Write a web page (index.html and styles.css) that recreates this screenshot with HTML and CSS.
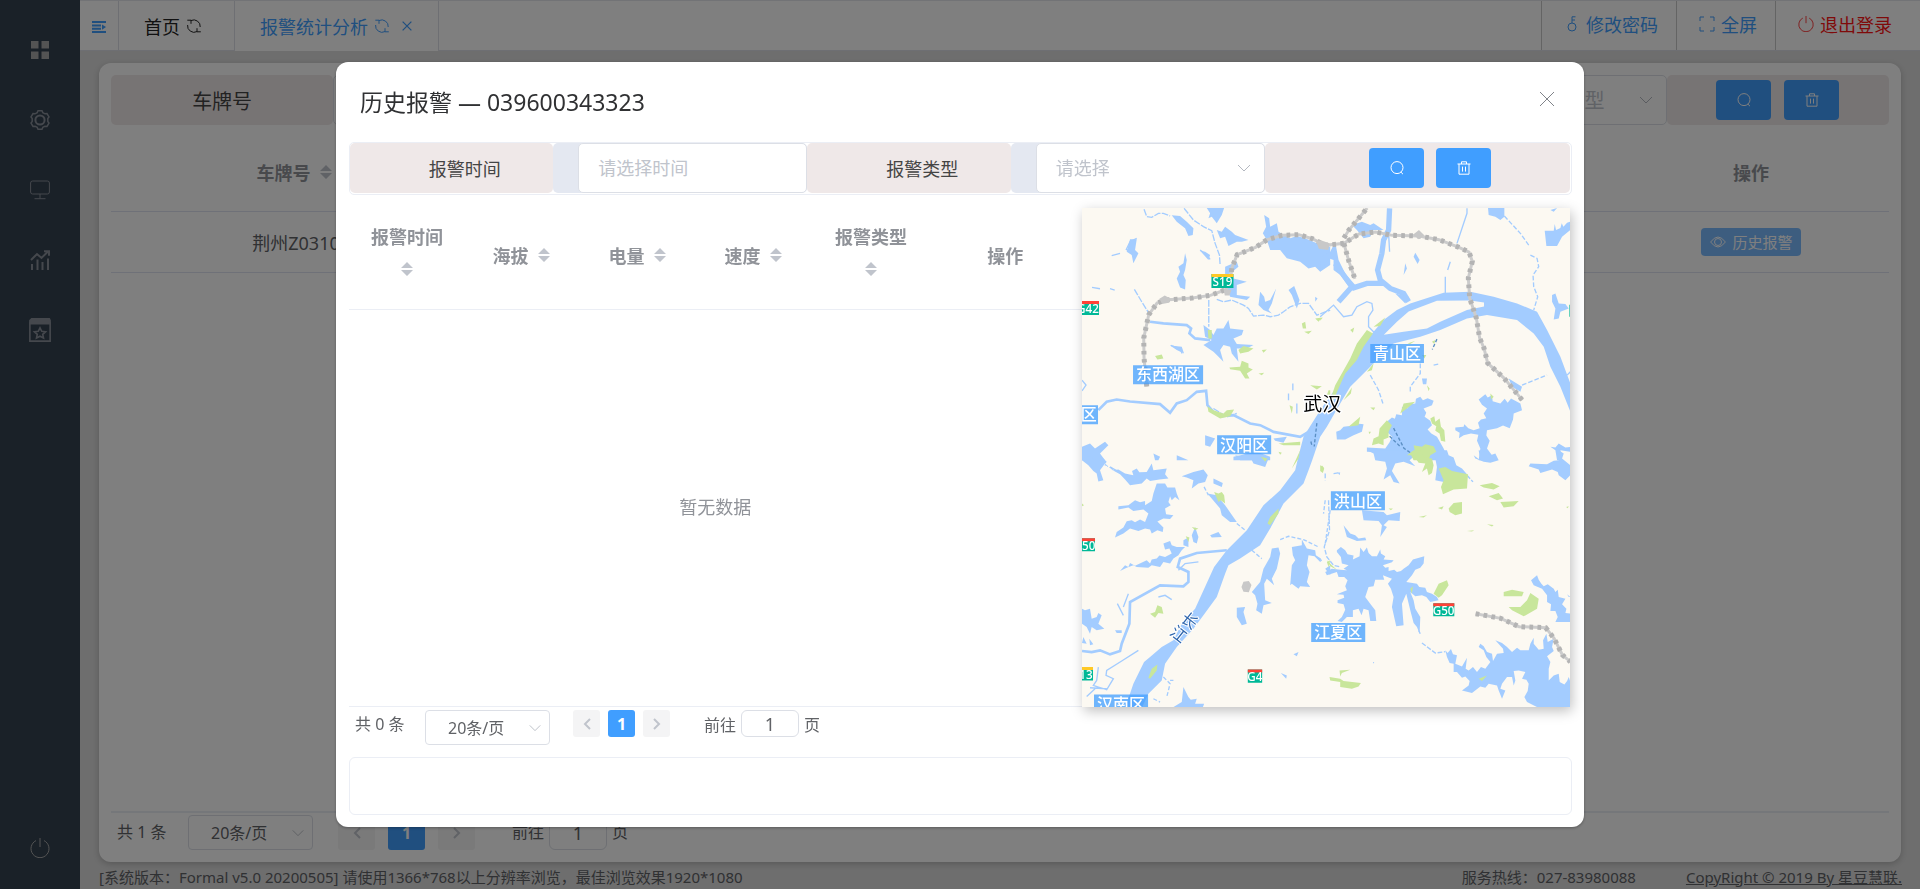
FILE: index.html
```html
<!DOCTYPE html>
<html lang="zh-CN">
<head>
<meta charset="utf-8">
<title>报警统计分析</title>
<link rel="stylesheet" href="styles.css">
</head>
<body>
<svg class="sprite" aria-hidden="true">
  <symbol id="i-refresh" viewBox="0 0 16 16"><path d="M5 2.5A6.5 6.5 0 0 1 14.2 9M11 13.6A6.5 6.5 0 0 1 1.6 7M1.3 2.2H5v3.6M14.8 13.8H11v-3.6" /></symbol>
  <symbol id="i-search" viewBox="0 0 16 16"><circle cx="8" cy="7.6" r="6" /><path d="M11.8 12 14 14.2" /></symbol>
  <symbol id="i-trash" viewBox="0 0 16 16"><path d="M1.5 4h13M5.5 4V1.8h5V4M3 4v10.2h10V4M6.5 6.6v5M9.5 6.6v5" /></symbol>
  <symbol id="i-down" viewBox="0 0 16 16"><path d="m2 5 6 6 6-6" /></symbol>
  <symbol id="i-close" viewBox="0 0 16 16"><path d="m1 1 14 14M15 1 1 15" /></symbol>
  <symbol id="i-power" viewBox="0 0 20 20"><path d="M6 2.6a9 9 0 1 0 8 0M10 0v9" /></symbol>
  <symbol id="i-prev" viewBox="0 0 16 16"><path d="m11 3-5 5 5 5" /></symbol>
  <symbol id="i-next" viewBox="0 0 16 16"><path d="m5 3 5 5-5 5" /></symbol>
  <symbol id="i-sort" viewBox="0 0 12 14"><path d="M6 0 12 6H0zM0 8h12l-6 6z" /></symbol>
</svg>

<div class="app">
  <nav class="sidebar" aria-label="主菜单">
    <a href="#grid" class="side-link bright" aria-label="首页"><svg class="icon-l solid" viewBox="0 0 20 20"><path d="M1 1h7.500v7.500H1zM11.500 1H19v7.500h-7.500zM1 11.500h7.500V19H1zM11.500 11.500H19V19h-7.500z" /></svg></a>
    <a href="#setting" class="side-link" aria-label="设置"><svg class="icon-l" viewBox="0 0 20 20"><path d="M7.200 2.600 8 .8h4l.8 1.800 2.200 1.200 2-.3 2 3.400-1.200 1.700v2.800l1.200 1.700-2 3.400-2-.3-2.200 1.200-.8 1.800H8l-.8-1.800L5 16.200l-2 .3-2-3.400 1.200-1.700V8.600L1 6.900l2-3.400 2 .3z" stroke-width="1.500" /><circle cx="10" cy="10" r="4.600" stroke-width="2" /></svg></a>
    <a href="#monitor" class="side-link" aria-label="监控"><svg class="icon-l" viewBox="0 0 20 20"><rect x=".6" y="1" width="18.800" height="13" rx="2" /><path d="M10 14v4.500M4.500 18.700h11" /></svg></a>
    <a href="#stats" class="side-link" aria-label="统计"><svg class="icon-l thick" viewBox="0 0 20 20"><path d="M1 10 7 4l4.500 4L18 1.500M14 1.200h5v4.500M2 14v6M7.500 9.500V20M12.500 12v8M18 8.500V20" /></svg></a>
    <a href="#report" class="side-link" aria-label="报表"><svg class="icon-xl" viewBox="0 0 20 22"><path class="fill" d="M0 2 2 0h17l1 2v4H0z" /><path d="M.7 4v17.200h18.600V4M10 9l1.600 3.200 3.500.4-2.600 2.400.7 3.400-3.200-1.700-3.200 1.700.7-3.400-2.600-2.400 3.500-.4z" stroke-width="1.500" /></svg></a>
    <button class="side-link side-exit bright" aria-label="退出"><svg class="icon-l"><use href="#i-power" /></svg></button>
  </nav>

  <div class="main">
    <header class="topbar">
      <button class="fold" aria-label="折叠菜单"><svg viewBox="0 0 14 12"><path d="M0 1h14M0 4.500h9M0 7.700h9M0 11h14" /><path class="fill" d="m10 3.500 4 2.600-4 2.600z" /></svg></button>
      <a href="#home" class="tab">首页<svg class="icon"><use href="#i-refresh" /></svg></a>
      <a href="#alarm" class="tab active">报警统计分析<svg class="icon"><use href="#i-refresh" /></svg><svg class="icon-xs" viewBox="0 0 16 16"><use href="#i-close" /></svg></a>
      <div class="actions">
        <a href="#password" class="action password"><svg class="icon" viewBox="0 0 16 16"><circle cx="8" cy="11" r="4" /><path d="M8 7V.8h3.500M8 4h3" /></svg>修改密码</a>
        <a href="#full" class="action full"><svg class="icon" viewBox="0 0 16 16"><path d="M1 5V1h4M11 1h4v4M15 11v4h-4M5 15H1v-4" /></svg>全屏</a>
        <a href="#logout" class="action logout"><svg class="icon" viewBox="0 0 20 20"><use href="#i-power" /></svg>退出登录</a>
      </div>
    </header>

    <main class="content">
      <section class="card">
        <div class="search-row">
          <label class="cell-label" for="plate">车牌号</label>
          <input id="plate" class="field" type="text">
          <span class="cell-label"></span>
          <input class="field" type="text" aria-label="设备号">
          <span class="cell-label"></span>
          <input class="field" type="text" aria-label="时间">
          <span class="select-box"><select class="field placeholder" aria-label="报警类型"><option>请选择报警类型</option></select><svg class="icon chevron"><use href="#i-down" /></svg></span>
          <div class="cell-buttons">
            <button class="btn" aria-label="搜索"><svg class="icon"><use href="#i-search" /></svg></button>
            <button class="btn" aria-label="清空"><svg class="icon"><use href="#i-trash" /></svg></button>
          </div>
        </div>
        <div class="page-table">
          <table class="grid-table">
            <colgroup><col class="col-plate"><col><col class="col-op"></colgroup>
            <thead><tr><th><span class="head">车牌号<svg class="sort"><use href="#i-sort" /></svg></span></th><th></th><th>操作</th></tr></thead>
            <tbody><tr><td>荆州Z0310</td><td></td><td><button class="btn-history"><svg class="icon" viewBox="0 0 16 16"><path d="M.6 8Q8-2 15.400 8 8 18 .6 8z" /><circle cx="8" cy="8" r="3.500" /></svg>历史报警</button></td></tr></tbody>
          </table>
        </div>
        <div class="pager pager-page">
          <span class="total">共 1 条</span>
          <span class="select-box"><select class="page-size" aria-label="每页条数"><option>20条/页</option></select><svg class="icon-s chevron" viewBox="0 0 16 16"><use href="#i-down" /></svg></span>
          <div class="pages">
            <button class="page" aria-label="上一页"><svg class="icon"><use href="#i-prev" /></svg></button>
            <button class="page current">1</button>
            <button class="page" aria-label="下一页"><svg class="icon"><use href="#i-next" /></svg></button>
          </div>
          <label class="jump">前往<input type="text" value="1">页</label>
        </div>
      </section>
    </main>

    <footer class="footer">
      <span>[系统版本：Formal v5.0 20200505] 请使用1366*768以上分辨率浏览，最佳浏览效果1920*1080</span>
      <span class="hotline">服务热线：027-83980088</span>
      <a href="#copyright">CopyRight © 2019 By 星豆慧联.</a>
    </footer>
  </div>
</div>

<div class="overlay">
  <div class="dialog" role="dialog" aria-labelledby="dialog-title">
    <div class="dialog-head">
      <h2 id="dialog-title">历史报警 — 039600343323</h2>
      <button class="dialog-close" aria-label="关闭"><svg class="icon"><use href="#i-close" /></svg></button>
    </div>
    <div class="filter">
      <label class="filter-label" for="time">报警时间</label>
      <span class="filter-input"><input id="time" class="field" type="text" placeholder="请选择时间"></span>
      <label class="filter-label" for="type">报警类型</label>
      <span class="filter-input"><span class="select-box"><select id="type" class="field placeholder"><option>请选择</option></select><svg class="icon chevron"><use href="#i-down" /></svg></span></span>
      <div class="filter-buttons">
        <button class="btn" aria-label="搜索"><svg class="icon"><use href="#i-search" /></svg></button>
        <button class="btn" aria-label="清空"><svg class="icon"><use href="#i-trash" /></svg></button>
      </div>
    </div>
    <div class="dialog-body">
      <div class="history">
        <table class="history-table">
          <colgroup><col span="5" class="col-data"><col></colgroup>
          <thead><tr>
            <th><span class="head stacked">报警时间<svg class="sort"><use href="#i-sort" /></svg></span></th>
            <th><span class="head">海拔<svg class="sort"><use href="#i-sort" /></svg></span></th>
            <th><span class="head">电量<svg class="sort"><use href="#i-sort" /></svg></span></th>
            <th><span class="head">速度<svg class="sort"><use href="#i-sort" /></svg></span></th>
            <th><span class="head stacked">报警类型<svg class="sort"><use href="#i-sort" /></svg></span></th>
            <th>操作</th>
          </tr></thead>
        </table>
        <div class="empty">暂无数据</div>
      </div>
      <div class="map">
        <svg viewBox="0 0 1464 1497" preserveAspectRatio="xMidYMid slice" role="img" aria-label="武汉地图">
          <g class="stream">
            <!-- north-west -->
            <g transform="translate(-36 -24)">
              <path d="M222 28 230 50 245 52 265 40 280 40 300 48M342 25 370 60 400 80 425 92 435 130 448 165 450 195M193 268 215 305 240 345M416 300 416 380M440 298 460 305 485 300 520 315 535 325 550 348 580 345 600 350 625 345 640 335 660 320 690 310 715 310 740 345 780 330M430 625 470 650 500 640" stroke-dasharray="20 4" />
              <path d="M66 262 90 266M120 266 134 270" />
              <path class="w2" d="M240 365 280 370 350 375 363 385 358 400 375 415 420 420M85 630 110 605 140 598 180 604 270 612 300 638 320 610 350 600 380 575 408 572 412 615 430 635 450 648 490 645 540 670 570 675 610 695 690 710 715 695" />
              <path d="M36 540 48 555 36 572M168 150 180 125 200 115M125 167 150 160M170 150 195 150M390 150 410 165 420 178M302 436 330 445 336 460M668 550 668 570M655 580 655 600M680 610 680 640" />
            </g>
            <!-- north-east -->
            <g transform="translate(714 -24)">
              <path d="M0 350 40 315 70 350 95 345 110 320 140 305 155 310 158 330 145 350 145 380 165 400M440 25 440 40 410 130M375 230 375 280M390 185 382 210M205 100 208 155M740 525 750 515" />
              <path d="M552 48 600 100 625 135M630 165 650 175 655 200 638 225 640 260 652 290 640 330M150 525 175 570 188 610M300 490 300 520 270 560 270 580M605 555 680 525M340 495 355 492" stroke-dasharray="14 6" />
              <path class="w4" d="M208 25 205 90 190 120 185 160 172 210 180 240 210 265 250 280 265 305M45 190 95 260 55 305M95 265 140 250 190 250" />
            </g>
            <!-- south-west -->
            <g transform="translate(-36 726)">
              <path class="w2" d="M470 300 380 308 330 325 323 350 355 365 355 395 340 408 270 405 180 455 178 520 155 580 150 602 120 612 90 600 65 605 36 602" />
              <path d="M205 600 155 632 110 660 108 675 130 685 110 718 85 710 70 705 80 690 85 650M110 715 60 712M50 738 75 715M265 440 285 435 305 448M142 460 160 495M175 430 160 470M325 360 345 340 385 335M120 50 180 85" />
              <path d="M402 110 415 135M500 220 525 240M545 300 575 325M630 268 655 258 700 268 745 290M765 150 760 190M780 180 765 280M280 680 300 700 290 740M250 745 270 755M300 690 310 690" stroke-dasharray="12 6" />
            </g>
            <!-- south-east -->
            <g transform="translate(714 726)">
              <path d="M15 70 15 90M25 150 28 240 12 290 20 320 40 345 60 350M305 578 345 608 375 604M440 75 458 95M295 540 300 550M40 70 55 68" stroke-dasharray="14 5" />
            </g>
          </g>

          <g class="water">
            <path d="M130 1497 154 1426 186 1361 204 1346 239 1316 274 1296 299 1246 339 1201 396 1076 434 1026 494 966 544 891 594 846 639 786 650 740 664 686 714 606 764 536 794 476 844 406 874 371 904 336 944 306 984 286 1084 254 1164 251 1234 266 1304 286 1364 311 1394 366 1434 446 1464 526V611L1434 536 1404 476 1384 416 1354 376 1304 336 1214 321 1154 331 1074 366 1014 386 934 406 884 456 844 496 804 536 774 586 734 656 714 686 690 756 679 786 664 826 604 886 564 961 534 1011 474 1051 439 1071 429 1096 404 1166 364 1221 334 1261 284 1316 249 1366 239 1416 199 1456 180 1497z" />
            <g transform="translate(-36 -24)">
              <path d="M305 46 330 48 350 65 370 85 368 105 355 108 345 85 320 65zM410 24 462 24 455 45 440 70 425 50 415 55 420 40zM440 90 455 95 465 80 485 95 495 105 535 120 515 125 500 125 475 138 465 110 450 115zM582 45 597 55 600 80 620 70 625 95 660 115 680 108 705 115 740 130 780 140 780 195 750 215 735 200 715 205 690 185 650 175 630 150 600 150 590 120 578 100 588 80zM345 160 350 180 345 210 340 225 347 240 345 268 330 262 320 235 330 215 325 200 340 190zM180 118 200 118 195 150 205 160 190 190 185 165 170 155zM570 275 582 290 585 305 600 300 618 265 605 310 595 330 605 340 580 330 565 315zM655 270 672 258 688 300 680 325 665 285zM735 290 742 295 735 305zM490 235 530 245 500 255 500 285 540 290 530 300 480 290 470 265zM465 200 500 185 505 200 480 220 465 225zM390 152 405 155 420 165 415 180zM400 375 420 390 430 405 440 385 460 385 475 360 480 385 520 390 515 405 490 415 500 432 550 435 530 445 500 445 505 485 485 460 480 440 460 435 450 450 460 485 440 465 430 455 400 435 425 420 405 410zM300 436 335 440 342 460 320 450zM36 740 60 730 75 745 105 725 115 735 90 760 105 780 36 780zM405 705 435 715 420 740 405 735zM250 760 270 770 265 780 255 780zM320 765 355 780 320 780zM490 770 560 755 600 770 600 780 490 780zM610 715 650 710 640 728 615 722z" />
            </g>
            <g transform="translate(714 -24)">
              <path d="M95 75 125 65 150 75 160 70 190 90 160 90 150 110 130 115 110 90zM30 155 45 125 55 180 75 220 105 255 90 265 60 225 40 210 40 180 25 175 0 215 0 172zM255 190 260 205 250 225zM285 158 298 180 292 192 280 170zM503 24 552 24 552 50 540 60 525 50 505 45zM673 92 700 92 703 72 707 90 720 84 724 70 729 80 740 68 750 65V90L725 110 710 138 678 138zM690 30 710 24 700 35zM695 285 705 280 715 310 735 312 745 325 720 335 715 355 700 358 705 325 695 305zM565 535 605 560 600 575 575 560zM305 535 320 535 318 552 308 552zM475 598 495 582 502 592 515 585 517 603 540 610 553 596 562 608 572 595 600 610 605 630 580 640 578 658 568 684 548 676 530 684 500 690 498 706 508 722 500 745 515 765 513 780 475 780 480 745 470 722 474 704 452 700 430 705 416 714 418 698 405 690 405 682 430 680 432 672 444 684 460 690 478 684 473 668 482 658 498 654 490 640 500 625 485 614zM245 620 262 624 268 612 285 610 287 596 300 590 308 600 322 594 340 602 335 615 310 625 318 638 313 650 330 662 335 675 322 688 333 700 350 710 370 745 385 780 290 780 270 760 255 780 222 770 200 757 140 755 140 742 195 745 208 726 215 710 200 695 205 680 200 665 215 652 224 656 228 642 245 645zM48 695 60 690 70 680 100 676 110 670 130 672 125 695 100 705 75 718 50 718zM690 740 705 742 715 730 735 742 750 740V755L720 750 725 780 710 780 705 750zM225 280 265 290 255 310z" />
            </g>
            <g transform="translate(-36 726)">
              <path d="M36 24 60 18 72 28 100 25 110 35 103 45 125 52 130 60 145 58 165 70 190 75 186 62 200 55 208 66 230 65 245 40 250 60 290 55 285 72 295 85 268 88 240 92 230 85 215 100 180 105 165 88 150 72 128 60 105 40 90 60 100 90 85 94 80 70 70 62 55 45 36 30zM260 100 285 100 292 112 315 112 320 130 328 150 315 140 305 150 300 138 295 155 302 165 285 175 288 192 310 195 300 206 280 205 262 214 280 232 278 245 262 240 245 250 240 238 225 235 205 242 180 235 160 250 135 262 140 245 160 232 170 213 185 210 195 216 210 208 225 215 235 190 220 178 190 182 175 172 145 178 145 168 175 165 195 150 210 156 225 152 225 165 245 152 250 130zM335 78 370 65 400 58 413 75 405 95 385 100 365 115 370 90 350 82zM430 85 458 98 455 110 430 100zM412 130 440 135 465 165 500 215 480 215 455 195 450 175zM365 255 375 230 385 260 380 280 370 275zM340 270 355 262 355 290 340 285zM420 255 445 245 455 260 425 262zM280 280 300 272 305 285 320 290 345 290 335 300 325 315 310 325 300 340 280 335 270 350 245 345 235 352 200 350 190 345 170 352 150 362 165 345 175 350 180 338 195 346 230 330 240 340 245 328 260 325 268 316 285 320 305 310 298 295 285 298zM36 475 45 480 60 475 65 505 80 500 85 488 95 495 85 520 103 535 80 540 65 530 60 550 50 530 36 520zM605 295 625 292 630 310 620 355 605 385 612 405 590 385 582 400 585 450 605 458 580 465 575 490 558 480 562 460 555 435 545 425 570 395 580 355 600 320zM665 290 695 285 695 268 710 295 735 300 737 315 752 325 750 335 733 318 715 315 710 345 718 365 710 395 720 410 690 408 685 415 665 400 660 405 665 345 675 330 668 315zM500 472 525 470 520 485 530 520 515 525 500 500zM495 15 510 18 530 10 560 10 595 25 585 50 550 40 545 30 510 30zM310 770 335 755 340 710 355 740 362 748 380 745 375 760 402 760 395 780 310 780zM135 540 155 540 155 548 140 548zM670 612 685 605 680 618zM632 668 650 675 648 685zM40 560 50 580 36 578zM58 565 70 582 60 585zM765 355 780 345 780 375z" />
            </g>
            <g transform="translate(714 726)">
              <path d="M140 0 260 0 280 20 268 30 285 48 270 42 250 35 225 40 215 62 238 100 220 95 210 75 190 88 200 55 195 35 165 30 160 10zM340 0 380 0 385 15 400 22 408 45 425 55 440 72 370 95 345 90 350 50zM460 15 480 30 475 0 500 5 510 15 525 10 535 30 510 38 490 35 465 25zM715 0 730 10 725 25 750 45V75L735 90 715 75 712 65 695 58 660 68 655 58 625 48 630 40 680 42 700 32 715 30zM125 180 190 185 200 195 240 185 238 212 205 210 190 225 200 230 180 260 185 225 175 212 130 210zM70 225 90 250 105 255 115 265 135 262 138 270 110 272 80 260zM50 300 62 290 75 300 82 312 100 316 98 328 118 318 120 292 130 305 140 292 145 308 155 318 170 318 180 298 182 310 195 318 190 328 220 330 215 336 188 345 195 352 205 350 205 362 222 358 230 365 242 362 250 355 265 345 278 328 312 318 310 340 300 352 285 358 275 375 258 395 290 400 297 410 315 412 320 425 335 430 350 440 355 450 330 455 318 440 305 435 285 438 270 425 280 450 285 475 300 500 298 550 290 530 280 518 270 480 258 430 245 460 250 525 228 528 215 470 220 440 212 415 203 400 215 385 188 375 192 388 165 388 160 408 145 410 135 440 150 460 165 480 168 512 150 512 145 480 130 475 124 495 115 475 98 480 98 500 80 500 65 515 52 512 65 500 75 478 70 462 52 458 52 450 72 442 70 433 50 432 80 420 75 408 82 390 72 380 55 380 50 365 20 375 15 365 35 355 60 358 80 360 70 355 85 345 65 340 62 320 50 305zM52 67 60 67 58 75zM632 390 650 375 655 388 663 400 670 408 682 402 700 415 705 425 712 418 715 440 735 445 725 462 738 475 735 488 750 490V515L705 515 712 500 705 482 690 482 692 462 680 455 680 435 665 415 640 405zM375 600 382 608 392 596 398 612 410 615 405 640 425 648 440 622 436 655 445 660 458 650 470 665 482 650 495 655 510 635 498 620 490 600 475 590 480 580 490 588 500 605 515 610 518 632 530 610 550 608 548 595 525 570 545 578 560 590 575 605 590 592 600 600 625 600 630 580 640 562 640 580 655 598 670 595 668 570 678 550 682 575 700 565 695 590 700 602 680 618 690 635 685 655 685 690 700 675 715 670 718 695 732 702 740 692 745 680 750 695V770H650L620 755 612 740 622 722 625 700 618 688 605 685 615 665 595 660 580 662 585 690 580 705 575 680 560 680 545 700 540 715 555 720 545 745 535 720 530 705 505 700 495 712 480 708 455 728 425 720 445 705 448 692 435 678 425 682 410 665 400 665 400 640 388 638 380 620zM740 432 750 440 745 440zM158 635 162 635 160 640zM0 325 6 330 0 335z" />
            </g>
          </g>
          <path class="land" d="M904 381 944 341 979 310 1064 278 1164 277 1205 283 1205 295 1154 306 1074 341 1034 361 964 371 900 381z" />

          <g class="green">
            <g transform="translate(-36 -24)"><path d="M413 390 425 390 425 415 415 415zM505 450 520 438 550 445 535 455 510 460zM478 502 510 500 515 482 535 490 535 502 548 508 530 520 538 535 525 535 510 512 480 507zM565 520 582 518 575 525zM255 468 275 463 280 475 262 478zM575 450 590 448 580 458zM695 370 705 365 708 385 698 385zM702 395 725 392 715 402zM735 355 755 352 745 365zM720 555 755 558 740 568zM658 615 668 620 665 640zM412 618 430 630 460 640 470 630 492 628 480 648 450 655 415 635zM625 730 690 725 690 735 640 735zM775 570 780 570 780 585 765 600z" /></g>
            <g transform="translate(714 -24)"><path d="M30 600 45 555 90 475 110 430 140 390 158 400 130 440 110 480 75 520 55 565 35 610zM160 380 195 352 180 378zM90 390 102 382 98 398zM70 600 95 562 92 580zM140 515 160 490 155 510zM335 425 345 420 342 432zM262 430 285 422 270 432zM0 355 8 352 0 362zM155 735 160 715 175 708 178 685 200 660 215 675 205 695 205 712 190 718 190 735 175 730zM330 655 342 648 345 665 358 655 362 680 372 690 375 725 362 722 358 700 345 692 348 678 335 670zM270 760 285 758 280 735 305 740 315 732 340 738 348 755 330 765 325 780 280 780zM320 555 328 565 325 573zM510 580 520 590 512 598zM145 695 152 695 148 702zM240 640 250 610 285 605 260 625zM85 680 120 650 115 675zM150 622 165 622 160 630zM305 465 318 465 312 475z" /></g>
            <g transform="translate(-36 726)"><path d="M592 220 600 200 625 175 625 190 600 225zM235 682 245 655 262 642 260 660 240 685zM432 125 445 130 455 125 462 135 465 160 452 150 445 155zM240 490 255 485 262 465 275 470 280 490 265 488 255 502zM347 258 358 262 355 275zM365 230 385 235 375 240zM572 20 592 25 585 35zM755 45 762 55 758 68zM665 55 690 0 685 25zM625 5 635 8 630 14zM36 160 42 165 36 168zM770 335 780 330 775 350z" /></g>
            <g transform="translate(714 726)"><path d="M355 55 375 50 395 62 443 72 440 115 400 118 368 132 362 110 370 90zM385 175 400 158 425 155 425 190 405 195 388 185zM353 173 370 168 365 178zM478 105 515 98 538 108 520 118 490 112zM505 138 535 128 548 145 530 150zM540 155 595 152 580 168 550 172zM295 200 320 195 310 202zM500 222 520 224 515 229zM440 242 462 240 455 244zM205 175 218 175 212 180zM340 430 355 400 380 390 385 405 365 435 355 442zM270 415 278 408 275 430zM550 425 575 418 610 425 605 438 550 438zM565 470 600 470 620 450 630 428 655 445 650 475 610 498 575 480zM475 685 500 675 485 692zM28 680 60 685 70 692 122 698 115 708 95 715 60 710 60 695 30 690zM58 660 90 658 65 668 60 678zM0 45 10 50 8 68 0 62zM20 330 35 345 50 358 30 348zM260 15 280 0 300 0 310 22 335 25 340 45 335 68 325 75 320 55 305 65 315 40 295 38 280 15zM737 170 745 168 742 174z" /></g>
          </g>

          <g>
            <path class="rail" d="M194 535 186 450 185 390 200 320 225 285 250 276 330 270 385 262 430 245 445 220 449 180 465 140 520 118 555 95 600 82 650 80 690 92 730 112 785 106 830 78 880 72 930 82 1010 84 1070 95 1130 118 1160 132 1170 160 1158 210 1162 270 1182 330 1192 390 1205 420 1216 465 1265 510 1290 540 1320 576M785 106 800 160 818 212M785 90 800 66 855 0M1180 1216 1255 1230 1310 1255 1390 1258 1415 1290 1440 1340 1464 1360" />
            <path class="ties" d="M194 535 186 450 185 390 200 320 225 285 250 276 330 270 385 262 430 245 445 220 449 180 465 140 520 118 555 95 600 82 650 80 690 92 730 112 785 106 830 78 880 72 930 82 1010 84 1070 95 1130 118 1160 132 1170 160 1158 210 1162 270 1182 330 1192 390 1205 420 1216 465 1265 510 1290 540 1320 576M785 106 800 160 818 212M785 90 800 66 855 0M1180 1216 1255 1230 1310 1255 1390 1258 1415 1290 1440 1340 1464 1360" />
            <path class="station" d="M232 272 248 262 266 272 260 284 240 288zM424 242 448 246 442 262 428 262zM700 96 720 98 742 106 738 126 710 122zM992 80 1010 66 1026 82 1010 94zM484 1120 500 1118 508 1130 500 1152 484 1150 478 1136z" />
            <path class="bridge" d="M1064 393 1050 424M934 660 965 720 985 734M922 684 955 716M704 645 696 715M686 700 690 715" />
          </g>

          <g class="shield">
            <path class="body" d="M388 198h66v42h-66zM-12 279h63v42h-63zM0 990h39v39H0zM-12 1376h45v40h-45zM497 1383h43v40h-43zM1053 1185h63v39h-63zM1461 290h3v36h-3z" />
            <path class="red" d="M-12 279h63v9h-63zM0 990h39v9H0zM497 1383h43v9h-43zM1053 1185h63v9h-63z" />
            <path class="yellow" d="M388 198h66v9h-66zM-12 1376h45v9h-45z" />
            <text x="421" y="234">S19</text><text x="18" y="314">G42</text><text x="20" y="1024">50</text><text x="12" y="1412">13</text><text x="518" y="1418">G4</text><text x="1084" y="1220">G50</text>
          </g>
          <g class="district">
            <path d="M153 471h210v57H153zM0 591h48v57H0zM405 681h162v57H405zM864 408h161v57H864zM746 849h162v57H746zM687 1244h162v57H687zM36 1458h162v57H36z" />
            <text x="258" y="517">东西湖区</text><text x="20" y="637">区</text><text x="486" y="727">汉阳区</text><text x="944" y="454">青山区</text><text x="827" y="895">洪山区</text><text x="768" y="1290">江夏区</text><text x="117" y="1504">汉南区</text>
          </g>
          <text class="city" x="720" y="608">武汉</text>
          <text class="river" transform="translate(322 1238) rotate(38)" y="16">长</text>
          <text class="river" transform="translate(289 1278) rotate(38)" y="16">江</text>
        </svg>
      </div>
    </div>
    <div class="pager">
      <span class="total">共 0 条</span>
      <span class="select-box"><select class="page-size" aria-label="每页条数"><option>20条/页</option></select><svg class="icon-s chevron" viewBox="0 0 16 16"><use href="#i-down" /></svg></span>
      <div class="pages">
        <button class="page" aria-label="上一页"><svg class="icon"><use href="#i-prev" /></svg></button>
        <button class="page current">1</button>
        <button class="page" aria-label="下一页"><svg class="icon"><use href="#i-next" /></svg></button>
      </div>
      <label class="jump">前往<input type="text" value="1">页</label>
    </div>
    <div class="address"></div>
  </div>
</div>
</body>
</html>
```

FILE: styles.css
```css
* { box-sizing: border-box; }

body {
  margin: 0;
  font-family: "Noto Sans", "Noto Sans CJK SC", sans-serif;
  font-size: 18px;
  font-weight: 400;
  color: #606266;
}

button, input, select { font: inherit; color: inherit; margin: 0; }
button { border: 0; background: none; padding: 0; }
a { color: inherit; text-decoration: none; }

svg { fill: none; stroke: currentColor; flex: none; }
.sprite { position: absolute; width: 0; height: 0; }
.fill, .solid { fill: currentColor; stroke: none; }
.thick { stroke-width: 2; }
.icon { width: 16px; height: 16px; }
.icon-s { width: 14px; height: 14px; }
.icon-xs { width: 10px; height: 10px; stroke-width: 2; }
.icon-l { width: 20px; height: 20px; }
.icon-xl { width: 22px; height: 24px; }

/* Application frame */
.app { display: flex; height: 100vh; background: #dcdcdc; }

.sidebar {
  width: 80px;
  padding-top: 15px;
  display: flex;
  flex-direction: column;
  background: #344250;
  color: #8a909a;
}
.side-link { height: 70px; display: flex; align-items: center; justify-content: center; }
.side-link.bright { color: #a8a8a8; }
.side-exit { margin-top: auto; height: 82px; }

.main { flex: 1; min-width: 0; display: flex; flex-direction: column; }

.topbar {
  height: 51px;
  display: flex;
  flex: none;
  background: #fff;
  border-top: 1px solid #e4e7ed;
  border-bottom: 1px solid #dcdfe6;
}
.fold { width: 38px; color: #409eff; }
.fold svg { width: 14px; height: 12px; stroke-width: 2; }
.tab {
  display: flex;
  align-items: center;
  gap: 6px;
  padding: 0 32px 0 25px;
  border-left: 1px solid #dcdfe6;
  color: #222;
}
.tab.active {
  margin-bottom: -1px;
  padding-right: 26px;
  background: #fff;
  border-right: 1px solid #dcdfe6;
  color: #409eff;
}
.tab .icon-xs { margin-left: 6px; }
.actions { margin-left: auto; display: flex; color: #409eff; }
.action {
  display: flex;
  align-items: center;
  gap: 6px;
  padding: 0 18px 3px 22px;
  border-left: 1px solid #c8c8c8;
}
.logout { padding-right: 28px; color: #ff1414; }

.content { flex: 1; min-height: 0; padding: 12px 19px 0; display: flex; }
.card {
  flex: 1;
  padding: 12px;
  display: flex;
  flex-direction: column;
  background: #fff;
  border-radius: 12px;
  box-shadow: 0 2px 6px rgba(0, 0, 0, .2);
}

.search-row { display: grid; grid-template-columns: repeat(8, 1fr); height: 50px; font-size: 20px; }
.cell-label, .cell-buttons, .filter-label, .filter-buttons {
  display: flex;
  align-items: center;
  justify-content: center;
  background: #efe8e8;
  border-radius: 5px;
  color: #444;
}
.cell-buttons { gap: 13px; }
.field {
  width: 100%;
  height: 50px;
  padding: 0 19px;
  background: #fff;
  border: 1px solid #dcdfe6;
  border-radius: 5px;
  appearance: none;
}
.field::placeholder, .placeholder { color: #c0c4cc; opacity: 1; }
.select-box { position: relative; display: block; }
.chevron { position: absolute; right: 13px; top: 0; bottom: 0; margin: auto; color: #b4b8c0; pointer-events: none; }

.btn { width: 55px; height: 40px; border-radius: 4px; background: #409eff; color: #fff; }
.btn svg, .btn-history svg { display: block; margin: auto; }

.page-table { flex: 1; }
.grid-table { width: 100%; border-collapse: collapse; table-layout: fixed; text-align: center; }
.grid-table th, .grid-table td { padding: 0; border-bottom: 1px solid #dfe3f0; }
.grid-table th { height: 86px; padding-top: 9px; color: #909399; font-weight: 700; }
.grid-table td { height: 61px; }
.col-plate { width: 370px; }
.col-op { width: 276px; }
.head { display: inline-flex; align-items: center; vertical-align: middle; }
.sort { width: 12px; height: 14px; margin: 10px 4px 10px 9px; fill: #c0c4cc; stroke: none; }
.head.stacked { flex-direction: column; line-height: 30px; }
.stacked .sort { margin: 10px 6px 12px; }
.btn-history {
  display: inline-flex;
  align-items: center;
  gap: 6px;
  height: 28px;
  padding: 0 8px 0 9px;
  border-radius: 4px;
  background: #7abaff;
  color: #fff;
  font-size: 15px;
  vertical-align: middle;
}

/* Pagination */
.pager { display: flex; align-items: flex-start; padding: 3px 0 0 6px; font-size: 16px; }
.total { width: 70px; line-height: 28px; }
.page-size {
  width: 125px;
  height: 35px;
  padding: 0 22px;
  appearance: none;
  background: #fff;
  border: 1px solid #dcdfe6;
  border-radius: 4px;
}
.pager .chevron { right: 8px; }
.pages { display: flex; gap: 8px; margin-left: 23px; }
.page {
  width: 27px;
  height: 27px;
  display: grid;
  place-items: center;
  border-radius: 3px;
  background: #f4f4f5;
  color: #c0c4cc;
}
.page svg { stroke-width: 2; }
.page.current { background: #409eff; color: #fff; font-weight: 700; }
.jump { margin-left: 34px; display: flex; gap: 5px; line-height: 30px; }
.jump input {
  width: 58px;
  height: 27px;
  padding: 0;
  border: 1px solid #dcdfe6;
  border-radius: 6px;
  background: #fff;
  text-align: center;
  font-size: 18px;
}
.pager-page { border-top: 2px solid #ebeef5; padding-top: 2px; }
.pager-page .total, .pager-page .jump { line-height: 34px; }
.pager-page .total { width: 71px; }
.pager-page .pages { gap: 13px; margin-left: 25px; }
.pager-page .page { width: 37px; height: 35px; }
.pager-page .jump input { height: 35px; }
.pager-page .jump { margin-left: 37px; }

.footer { display: flex; height: 27px; padding: 1px 18px 0 19px; align-items: center; font-size: 15px; color: #606266; }
.hotline { margin: 0 50px 0 auto; }
.footer a { text-decoration: underline; }

/* Dialog */
.overlay { position: fixed; inset: 0; background: rgba(0, 0, 0, .5); }
.dialog {
  width: 65%;
  margin: 62px auto 0;
  padding: 12px 12px 12px 13px;
  background: #fff;
  border-radius: 12px;
  box-shadow: 0 1px 3px rgba(0, 0, 0, .3);
}
.dialog-head { height: 68px; padding: 0 17px 18px 11px; display: flex; align-items: center; justify-content: space-between; }
.dialog-head h2 { margin: 4px 0 0; font-size: 23px; font-weight: 400; color: #303133; }
.dialog-close { height: 16px; color: #808389; }
.dialog-close svg { display: block; }
.filter {
  display: grid;
  grid-template-columns: 4fr 5fr 4fr 5fr 6fr;
  padding: 0 1px 1px 0;
  border: 1px solid #ebeef5;
  border-radius: 5px;
}
.filter-label, .filter-buttons { padding-left: 26px; }
.filter-buttons { gap: 12px; }
.filter-input { padding-left: 25px; background: #e4e8f1; border-radius: 5px; }

.dialog-body { display: flex; margin-top: 13px; }
.history { flex: 3; display: flex; flex-direction: column; border-bottom: 1px solid #ebeef5; }
.history-table { width: 100%; table-layout: fixed; border-collapse: collapse; }
.history-table th { height: 101px; padding: 0 0 6px; border-bottom: 1px solid #ebeef5; color: #909399; font-weight: 700; }
.col-data { width: 116px; }
.empty { flex: 1; display: grid; place-items: center; padding-bottom: 3px; color: #909399; }
.map { flex: 2; margin-right: 2px; box-shadow: 2px 4px 12px rgba(0, 0, 0, .25); }
.map svg { display: block; width: 100%; aspect-ratio: 1464 / 1497; background: #fcf9f2; stroke: none; }
.address { height: 58px; margin-top: 12px; border: 1px solid #ebeef5; border-radius: 6px; }

/* Map */
.map .stream { fill: none; stroke: #a3ccff; stroke-width: 4; }
.stream .w2 { stroke-width: 8; }
.stream .w4 { stroke-width: 16; }
.water { fill: #a3ccff; }
.land { fill: #fcf9f2; }
.green { fill: #c8e69b; }
.rail { fill: none; stroke: #ccc; stroke-width: 9; }
.ties { fill: none; stroke: #b4b4b4; stroke-width: 15; stroke-dasharray: 11 13; }
.station { fill: #c8c8c8; }
.bridge { fill: none; stroke: #5b8fc4; stroke-width: 4; stroke-dasharray: 10 6; }
.shield .body { fill: #00b897; }
.shield .red { fill: #ff4136; }
.shield .yellow { fill: #ffc926; }
.shield text { fill: #fff; font-size: 35px; font-weight: 500; text-anchor: middle; }
.district path { fill: #409eff; fill-opacity: .75; }
.district text { fill: #fff; font-size: 48px; font-weight: 500; text-anchor: middle; }
.city { fill: #000; stroke: #fff; stroke-width: 8; paint-order: stroke; font-size: 57px; text-anchor: middle; }
.river { fill: #2f66ad; stroke: #fff; stroke-width: 6; paint-order: stroke; font-size: 48px; text-anchor: middle; }
```
